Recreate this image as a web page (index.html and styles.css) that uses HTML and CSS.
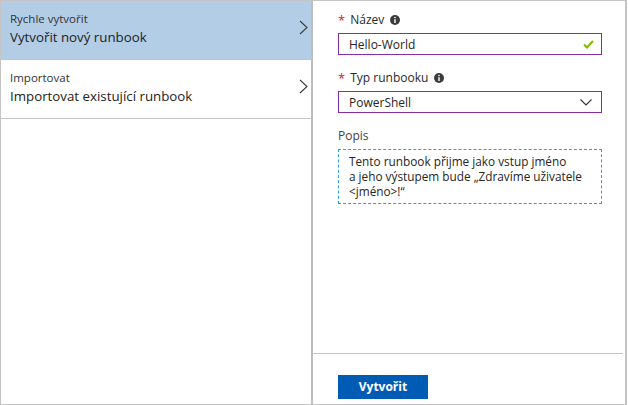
FILE: index.html
```html
<!DOCTYPE html>
<html lang="cs">
<head>
<meta charset="utf-8">
<link rel="stylesheet" href="styles.css">
</head>
<body>
<div class="frame">
  <div class="menu">
    <div class="item selected">
      <div class="item-text">
        <div class="sub">Rychle vytvořit</div>
        <div class="main">Vytvořit nový runbook</div>
      </div>
      <svg class="chev" width="9" height="15" viewBox="0 0 9 15"><polyline points="1,1 8,7.5 1,14" fill="none" stroke="#3a3a3a" stroke-width="1.1"/></svg>
    </div>
    <div class="item">
      <div class="item-text">
        <div class="sub">Importovat</div>
        <div class="main">Importovat existující runbook</div>
      </div>
      <svg class="chev" width="9" height="15" viewBox="0 0 9 15"><polyline points="1,1 8,7.5 1,14" fill="none" stroke="#3a3a3a" stroke-width="1.1"/></svg>
    </div>
  </div>
  <div class="form">
    <div class="fields">
      <div class="field">
        <div class="label"><span class="req">*</span>Název<svg class="info" width="10" height="10" viewBox="0 0 10 10"><circle cx="5" cy="5" r="5" fill="#3c3c3c"/><rect x="4.3" y="4.2" width="1.4" height="3.8" fill="#fff"/><circle cx="5" cy="2.6" r="0.8" fill="#fff"/></svg></div>
        <div class="box input"><span>Hello-World</span><svg class="check" width="11" height="9" viewBox="0 0 11 9"><polyline points="1,4.5 4,7.5 10,1" fill="none" stroke="#7fba00" stroke-width="2"/></svg></div>
      </div>
      <div class="field">
        <div class="label"><span class="req">*</span>Typ runbooku<svg class="info" width="10" height="10" viewBox="0 0 10 10"><circle cx="5" cy="5" r="5" fill="#3c3c3c"/><rect x="4.3" y="4.2" width="1.4" height="3.8" fill="#fff"/><circle cx="5" cy="2.6" r="0.8" fill="#fff"/></svg></div>
        <div class="box input"><span>PowerShell</span><svg class="down" width="12" height="7" viewBox="0 0 12 7"><polyline points="0.5,0.5 6,6 11.5,0.5" fill="none" stroke="#333" stroke-width="1.1"/></svg></div>
      </div>
      <div class="field">
        <div class="label plain">Popis</div>
        <div class="box area">Tento runbook přijme jako vstup jméno<br>a jeho výstupem bude „Zdravíme uživatele<br>&lt;jméno&gt;!“</div>
      </div>
    </div>
    <div class="footer">
      <button class="btn">Vytvořit</button>
    </div>
  </div>
</div>
</body>
</html>
```
FILE: styles.css
```css
* { box-sizing: border-box; }
html, body { margin: 0; padding: 0; background: #fff; }
body { font-family: "Open Sans", "Noto Sans", sans-serif; color: #262626; }

.frame {
  display: flex;
  width: 627px;
  height: 405px;
  border: 1px solid #c4c4c4;
  border-right-width: 2px;
}

.menu {
  width: 312px;
  border-right: 2px solid #bdbdbd;
  display: flex;
  flex-direction: column;
}

.item {
  height: 59px;
  border-bottom: 1px solid #c4c4c4;
  display: flex;
  align-items: center;
  padding: 0 3px 0 9px;
}
.item.selected { background: #b3cde6; }
.item-text { flex: 1; white-space: nowrap; }
.sub { font-size: 11.5px; line-height: 16px; color: #333; margin-top: -3px; }
.main { font-size: 13.3px; line-height: 20px; color: #222; }
.chev { margin-top: -6px; }

.form {
  flex: 1;
  display: flex;
  flex-direction: column;
}
.fields { flex: 1; padding: 11px 23px 0 25px; }
.field { margin-bottom: 15px; }
.label {
  font-size: 12px;
  line-height: 16px;
  height: 16px;
  margin-bottom: 5px;
  display: flex;
  align-items: center;
  color: #2a2a2a;
}
.label.plain { color: #444; }
.req { color: #e81123; margin-right: 5px; font-size: 13px; }
.info { margin-left: 6px; }

.box {
  border: 1px solid #8a2da5;
  font-size: 12px;
  padding: 0 9px 0 10px;
  white-space: nowrap;
}
.input {
  height: 22px;
  display: flex;
  align-items: center;
  justify-content: space-between;
}
.check { margin-top: 1px; margin-right: -2px; }
.area {
  height: 55px;
  border: 1px dashed #2a9fe6;
  line-height: 15px;
  padding-top: 4px;
  font-size: 11.8px;
}

.footer {
  height: 51px;
  border-top: 1px solid #c4c4c4;
  margin-right: 2px;
  padding: 20px 0 0 25px;
}
.btn {
  width: 90px;
  height: 24px;
  border: none;
  background: #005bb5;
  color: #fff;
  font-family: "Open Sans", "Noto Sans", sans-serif;
  font-weight: 700;
  font-size: 12px;
  padding: 0;
}
```
